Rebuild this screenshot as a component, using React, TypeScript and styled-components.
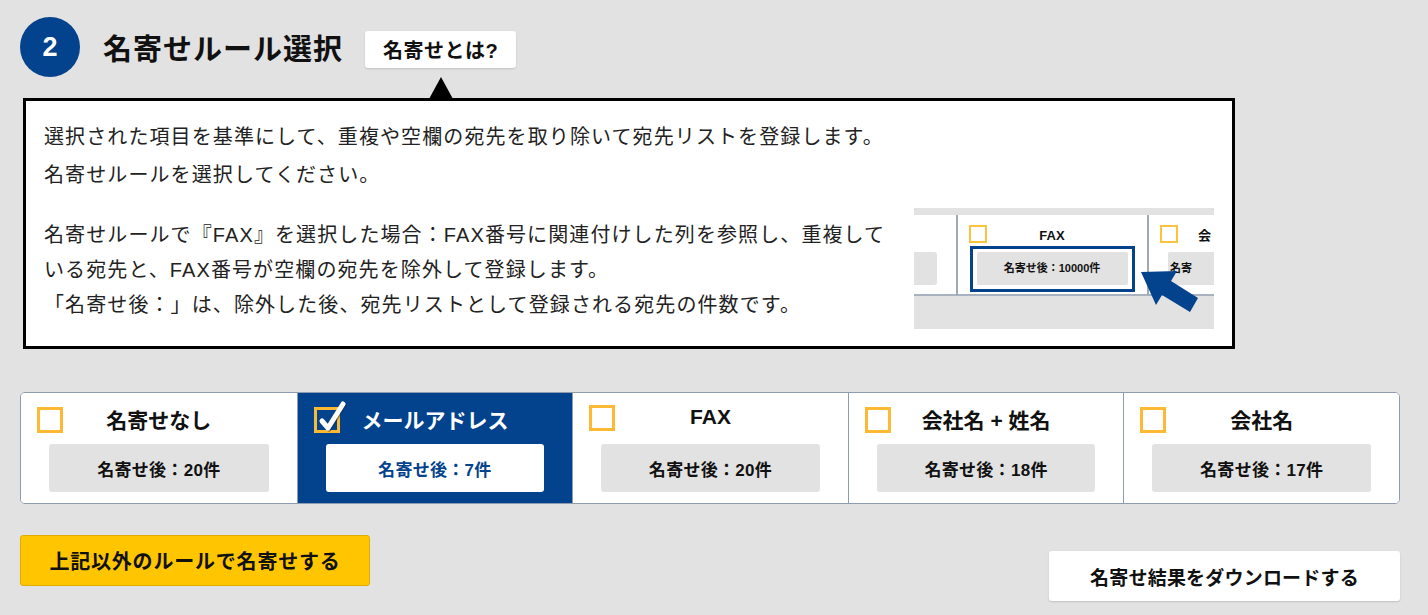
import styled, { createGlobalStyle } from "styled-components";

const GlobalStyle = createGlobalStyle`
  body {
    margin: 0;
    background: #e2e2e2;
    font-family: "Liberation Sans", "Noto Sans CJK JP", sans-serif;
    color: #111;
  }
`;

const BLUE = "#03428c";

const Page = styled.div`
  padding: 17px 28px 14px 20px;
`;

const Header = styled.div`
  display: flex;
  align-items: center;
  height: 60px;
`;

const StepBadge = styled.div`
  width: 60px;
  height: 60px;
  border-radius: 50%;
  background: ${BLUE};
  color: #fff;
  font-size: 27px;
  font-weight: bold;
  display: flex;
  align-items: center;
  justify-content: center;
  margin-right: 23px;
`;

const Title = styled.h2`
  margin: 0 22px 0 0;
  font-size: 29px;
  letter-spacing: 1px;
  font-weight: bold;
`;

const HelpButton = styled.button`
  width: 151px;
  height: 37px;
  margin-top: 5px;
  border: none;
  border-radius: 3px;
  background: #fff;
  box-shadow: 0 1px 2px rgba(0, 0, 0, 0.15);
  font-family: inherit;
  font-size: 20px;
  letter-spacing: 0.5px;
  font-weight: bold;
  color: #111;
  padding: 0;
`;

const Tip = styled.div`
  position: relative;
  box-sizing: border-box;
  width: 1212px;
  height: 251px;
  margin: 21px 0 0 3px;
  border: 3px solid #000;
  background: #fff;
  padding: 17px 18px 0 18px;
  font-size: 20px;
  letter-spacing: 1.1px;
  color: #222;

  &::before {
    content: "";
    position: absolute;
    top: -24px;
    left: 403px;
    border-left: 12px solid transparent;
    border-right: 12px solid transparent;
    border-bottom: 22px solid #000;
  }
`;

const Lead = styled.p`
  margin: 0;
  line-height: 38px;
  white-space: nowrap;
`;

const Example = styled.div`
  display: flex;
  justify-content: space-between;
  margin-top: 24px;
`;

const ExampleText = styled.p`
  margin: 0;
  line-height: 35px;
  white-space: nowrap;
`;

const Sample = styled.svg`
  flex: none;
  margin-top: -10px;
  letter-spacing: 0;
  font-family: "Liberation Sans", "Noto Sans CJK JP", sans-serif;
`;

const Rules = styled.div`
  display: grid;
  grid-template-columns: repeat(5, 1fr);
  width: 1380px;
  box-sizing: border-box;
  margin-top: 43px;
  border: 1px solid #8e9bb0;
  border-radius: 5px;
  background: #fff;
  overflow: hidden;
`;

const RuleCard = styled.div<{ $selected?: boolean }>`
  padding: 12px 0 11px;
  background: ${(p) => (p.$selected ? BLUE : "#fff")};
  color: ${(p) => (p.$selected ? "#fff" : "#111")};

  & + & {
    border-left: 1px solid #8e9bb0;
  }
`;

const RuleHead = styled.div`
  display: grid;
  grid-template-columns: 26px 1fr 26px;
  align-items: center;
  height: 26px;
  padding: 0 16px;
`;

const Check = styled.span`
  position: relative;
  box-sizing: border-box;
  width: 26px;
  height: 26px;
  border: 3px solid #fdb934;

  svg {
    position: absolute;
    left: 0;
    top: -11px;
    overflow: visible;
  }
`;

const RuleLabel = styled.span`
  position: relative;
  top: -1px;
  text-align: center;
  font-size: 21px;
  font-weight: bold;
`;

const CountBox = styled.div<{ $selected?: boolean }>`
  height: 48px;
  margin: 13px 28px 0;
  border-radius: 3px;
  background: ${(p) => (p.$selected ? "#fff" : "#e2e2e2")};
  color: ${(p) => (p.$selected ? BLUE : "#111")};
  display: flex;
  align-items: center;
  justify-content: center;
  font-size: 17px;
  letter-spacing: 0.3px;
  font-weight: bold;
`;

const Actions = styled.div`
  display: flex;
  justify-content: space-between;
  align-items: flex-start;
  width: 1380px;
  margin-top: 31px;
`;

const OtherRuleButton = styled.button`
  width: 350px;
  height: 51px;
  border: 1px solid #e0ac00;
  border-radius: 3px;
  background: #ffc600;
  font-family: inherit;
  font-size: 20px;
  letter-spacing: 0.8px;
  font-weight: bold;
  color: #111;
`;

const DownloadButton = styled.button`
  width: 351px;
  height: 50px;
  margin-top: 16px;
  border: none;
  border-radius: 3px;
  background: #fff;
  box-shadow: 0 1px 2px rgba(0, 0, 0, 0.15);
  font-family: inherit;
  font-size: 19px;
  letter-spacing: 0.2px;
  font-weight: bold;
  color: #111;
`;

const rules = [
  { label: "名寄せなし", count: 20 },
  { label: "メールアドレス", count: 7, selected: true },
  { label: "FAX", count: 20 },
  { label: "会社名 + 姓名", count: 18 },
  { label: "会社名", count: 17 },
];

function CheckMark() {
  return (
    <svg width="30" height="34" viewBox="0 0 30 34">
      <path
        d="M5 22 L11 29 L26 5"
        fill="none"
        stroke="#1b2b45"
        strokeWidth="5"
        strokeLinecap="round"
        strokeLinejoin="round"
        opacity="0.5"
        transform="translate(1 1)"
      />
      <path
        d="M5 22 L11 29 L26 5"
        fill="none"
        stroke="#fff"
        strokeWidth="5"
        strokeLinecap="round"
        strokeLinejoin="round"
      />
    </svg>
  );
}

function SampleImage() {
  return (
    <Sample width="300" height="121" viewBox="0 0 300 121">
      <rect x="0" y="0" width="300" height="121" fill="#e2e2e2" />
      <rect x="0" y="7" width="300" height="80" fill="#fff" />
      <rect x="0" y="86" width="300" height="2" fill="#a8b2c0" />
      <rect x="42" y="7" width="2" height="80" fill="#9ea9b8" />
      <rect x="233" y="7" width="2" height="80" fill="#9ea9b8" />
      <rect x="-4" y="44" width="27" height="33" rx="3" fill="#e2e2e2" />

      <rect x="56" y="18" width="16" height="16" fill="none" stroke="#fcc43c" strokeWidth="2" />
      <text x="138" y="32" textAnchor="middle" fontSize="13" fontWeight="bold" fill="#111">
        FAX
      </text>
      <rect x="57.5" y="39.5" width="162" height="43" fill="#fff" stroke={BLUE} strokeWidth="3" />
      <rect x="63" y="44" width="151" height="33" rx="2" fill="#e2e2e2" />
      <text x="138" y="64" textAnchor="middle" fontSize="11" fontWeight="bold" fill="#111">
        名寄せ後：10000件
      </text>

      <rect x="247" y="18" width="16" height="16" fill="none" stroke="#fcc43c" strokeWidth="2" />
      <text x="284" y="32" fontSize="13" fontWeight="bold" fill="#111">
        会
      </text>
      <rect x="254" y="44" width="60" height="33" rx="2" fill="#e2e2e2" />
      <text x="256" y="64" fontSize="11" fontWeight="bold" fill="#111">
        名寄
      </text>

      <polygon
        points="227,64 263,63 257,73 284,90 276,104 248,87 242,97"
        fill={BLUE}
      />
    </Sample>
  );
}

export default function App() {
  return (
    <Page>
      <GlobalStyle />
      <Header>
        <StepBadge>2</StepBadge>
        <Title>名寄せルール選択</Title>
        <HelpButton>名寄せとは?</HelpButton>
      </Header>

      <Tip>
        <Lead>
          選択された項目を基準にして、重複や空欄の宛先を取り除いて宛先リストを登録します。
          <br />
          名寄せルールを選択してください。
        </Lead>
        <Example>
          <ExampleText>
            名寄せルールで『FAX』を選択した場合：FAX番号に関連付けした列を参照し、重複して
            <br />
            いる宛先と、FAX番号が空欄の宛先を除外して登録します。
            <br />
            「名寄せ後：」は、除外した後、宛先リストとして登録される宛先の件数です。
          </ExampleText>
          <SampleImage />
        </Example>
      </Tip>

      <Rules>
        {rules.map((r) => (
          <RuleCard key={r.label} $selected={r.selected}>
            <RuleHead>
              <Check>{r.selected && <CheckMark />}</Check>
              <RuleLabel>{r.label}</RuleLabel>
              <span />
            </RuleHead>
            <CountBox $selected={r.selected}>名寄せ後：{r.count}件</CountBox>
          </RuleCard>
        ))}
      </Rules>

      <Actions>
        <OtherRuleButton>上記以外のルールで名寄せする</OtherRuleButton>
        <DownloadButton>名寄せ結果をダウンロードする</DownloadButton>
      </Actions>
    </Page>
  );
}
